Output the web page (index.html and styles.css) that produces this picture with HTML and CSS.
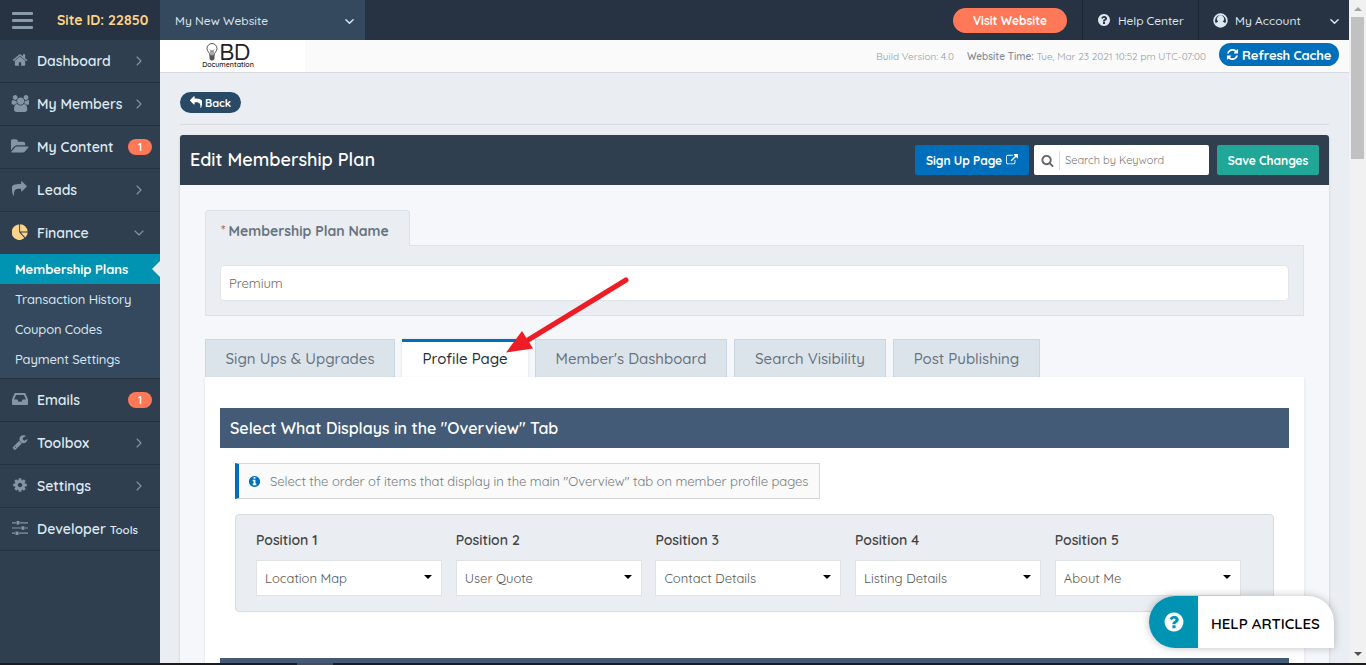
FILE: index.html
```
<!DOCTYPE html>
<html lang="en">
<head>
    <meta charset="UTF-8">
    <meta name="viewport" content="width=device-width, initial-scale=1.0">
    <title>Edit Membership Plan</title>
    <link rel="stylesheet" href="styles.css">
</head>
<body>
    <svg class="sprite">
        <symbol id="home" viewBox="0 0 1792 1792"><path d="M1472 992v480q0 26-19 45t-45 19h-384v-384h-256v384h-384q-26 0-45-19t-19-45v-480q0-1 .5-3t.5-3l575-474 575 474q1 2 1 6zm223-69l-62 74q-8 9-21 11h-3q-13 0-21-7l-692-577-692 577q-12 8-24 7-13-2-21-11l-62-74q-8-10-7-23.5t11-21.5l719-599q32-26 76-26t76 26l244 204v-195q0-14 9-23t23-9h192q14 0 23 9t9 23v408l219 182q10 8 11 21.5t-7 23.5z"/></symbol>
        <symbol id="users" viewBox="-64 0 1920 1792"><path d="M593 896q-162 5-265 128h-134q-82 0-138-40.5t-56-118.500q0-353 124-353 6 0 43.5 21t97.5 42.5 119 21.5q67 0 133-23-5 37-5 66 0 139 81 256zm1071 637q0 120-73 189.500t-194 69.500h-874q-121 0-194-69.500t-73-189.500q0-53 3.500-103.500t14-109 26.500-108.500 43-97.500 62-81 85.500-53.500 111.500-20q10 0 43 21.500t73 48 107 48 135 21.500 135-21.500 107-48 73-48 43-21.500q61 0 111.500 20t85.500 53.500 62 81 43 97.500 26.500 108.500 14 109 3.500 103.500zm-1024-1277q0 106-75 181t-181 75-181-75-75-181 75-181 181-75 181 75 75 181zm704 384q0 159-112.500 271.500t-271.500 112.500-271.500-112.500-112.500-271.500 112.500-271.500 271.500-112.500 271.500 112.500 112.500 271.500zm576 225q0 78-56 118.500t-138 40.500h-134q-103-123-265-128 81-117 81-256 0-29-5-66 66 23 133 23 59 0 119-21.500t97.500-42.500 43.500-21q124 0 124 353zm-128-609q0 106-75 181t-181 75-181-75-75-181 75-181 181-75 181 75 75 181z"/></symbol>
        <symbol id="folder" viewBox="0 0 1856 1792"><path d="M1815 952q0 31-31 66l-336 396q-43 51-120.500 86.500t-143.500 35.500h-1088q-34 0-60.500-13t-26.500-43q0-31 31-66l336-396q43-51 120.500-86.500t143.500-35.500h1088q34 0 60.500 13t26.500 43zm-343-344v160h-832q-94 0-197 47.500t-164 119.500l-337 396-5 6q0-4-.5-12.500t-.5-12.500v-960q0-92 66-158t158-66h320q92 0 158 66t66 158v32h544q92 0 158 66t66 158z"/></symbol>
        <symbol id="reply" viewBox="0 0 1792 1792"><path d="M1792 1120q0 166-127 451-3 7-10.500 24t-13.500 30-13 22q-12 17-28 17-15 0-23.500-10t-8.500-25q0-9 2.500-26.500t2.500-23.500q5-68 5-123 0-112-19.500-200.500t-54-153.500-89-111.500-115-76-141.500-42-160-12h-224v256q0 26-19 45t-45 19-45-19l-512-512q-19-19-19-45t19-45l512-512q19-19 45-19t45 19 19 45v256h224q713 0 875 403 53 134 53 333z"/></symbol>
        <symbol id="pie" viewBox="0 0 16 16"><path d="M7.200 .6V8.300l5.200 5.800A7.700 7.700 0 1 1 7.200 .6z"/><path d="M8.100 .3a7.500 7.500 0 0 1 7.500 7.200H8.100z"/><path d="M8.800 8.400h6.900a7.600 7.600 0 0 1-2.400 5z"/></symbol>
        <symbol id="inbox" viewBox="0 0 16 16"><path fill-rule="evenodd" d="M3.400 2h9.200q.8 0 1.100.8L16 8.600V13q0 1-1 1H1q-1 0-1-1V8.600l2.300-5.800Q2.600 2 3.400 2zM4 4L2.200 8.500h3.200l1.100 2.200h3l1.100-2.200h3.200L12 4z"/></symbol>
        <symbol id="wrench" viewBox="0 0 1792 1792"><path d="M448 1472q0-26-19-45t-45-19-45 19-19 45 19 45 45 19 45-19 19-45zm644-420l-682 682q-37 37-90 37-52 0-91-37l-106-108q-38-36-38-90 0-53 38-91l681-681q39 98 114.500 173.500t173.500 114.500zm634-435q0 39-23 106-47 134-164.500 217.500t-258.500 83.500q-185 0-316.500-131.500t-131.500-316.500 131.500-316.500 316.500-131.500q58 0 121.500 16.500t107.500 46.500q16 11 16 28t-16 28l-293 169v224l193 107q5-3 79-48.500t135.500-81 70.500-35.500q15 0 23.500 10t8.500 25z"/></symbol>
        <symbol id="cog" viewBox="0 0 1792 1792"><path d="M1152 896q0-106-75-181t-181-75-181 75-75 181 75 181 181 75 181-75 75-181zm512-109v222q0 12-8 23t-20 13l-185 28q-19 54-39 91 35 50 107 138 10 12 10 25t-9 23q-27 37-99 108t-94 71q-12 0-26-9l-138-108q-44 23-91 38-16 136-29 186-7 28-36 28h-222q-14 0-24.500-8.500t-11.500-21.500l-28-184q-49-16-90-37l-141 107q-10 9-25 9-14 0-25-11-126-114-165-168-7-10-7-23 0-12 8-23 15-21 51-66.500t54-70.500q-27-50-41-99l-183-27q-13-2-21-12.500t-8-23.500v-222q0-12 8-23t19-13l186-28q14-46 39-92-40-57-107-138-10-12-10-24 0-10 9-23 26-36 98.500-107.500t94.500-71.500q13 0 26 10l138 107q44-23 91-38 16-136 29-186 7-28 36-28h222q14 0 24.500 8.500t11.500 21.500l28 184q49 16 90 37l142-107q9-9 24-9 13 0 25 10 129 119 165 170 7 8 7 22 0 12-8 23-15 21-51 66.500t-54 70.500q26 50 41 98l183 28q13 2 21 12.500t8 23.500z"/></symbol>
        <symbol id="sliders" viewBox="0 0 16 16"><path d="M0 2.200h4v1.200H0zM8 2.200h8v1.200H8zM4.500 1h3v3.600h-3zM0 7.400h9v1.200H0zM13 7.400h3v1.200h-3zM9.500 6.200h3v3.600h-3zM0 12.600h3v1.200H0zM7 12.600h9v1.200H7zM3.500 11.400h3V15h-3z"/></symbol>
        <symbol id="question" viewBox="0 0 1792 1792"><path d="M1024 1376v-192q0-14-9-23t-23-9h-192q-14 0-23 9t-9 23v192q0 14 9 23t23 9h192q14 0 23-9t9-23zm256-672q0-88-55.500-163t-138.500-116-170-41q-243 0-371 213-15 24 8 42l132 100q7 6 19 6 16 0 25-12 53-68 86-92 34-24 86-24 48 0 85.500 26t37.500 59q0 38-20 61t-68 45q-63 28-115.500 86.500t-52.500 125.500v36q0 14 9 23t23 9h192q14 0 23-9t9-23q0-19 21.500-49.500t54.500-49.500q32-18 49-28.500t46-35 44.500-48 28-60.500 12.500-81zm384 192q0 209-103 385.500t-279.500 279.500-385.500 103-385.500-103-279.500-279.500-103-385.500 103-385.500 279.500-279.500 385.500-103 385.500 103 279.500 279.500 103 385.500z"/></symbol>
        <symbol id="info" viewBox="0 0 1792 1792"><path d="M1152 1376v-160q0-14-9-23t-23-9h-96v-512q0-14-9-23t-23-9h-320q-14 0-23 9t-9 23v160q0 14 9 23t23 9h96v320h-96q-14 0-23 9t-9 23v160q0 14 9 23t23 9h448q14 0 23-9t9-23zm-128-896v-160q0-14-9-23t-23-9h-192q-14 0-23 9t-9 23v160q0 14 9 23t23 9h192q14 0 23-9t9-23zm640 416q0 209-103 385.500t-279.500 279.500-385.500 103-385.500-103-279.500-279.500-103-385.500 103-385.500 279.500-279.500 385.500-103 385.500 103 279.500 279.500 103 385.500z"/></symbol>
        <symbol id="user" viewBox="0 0 16 16"><path fill-rule="evenodd" d="M8 .3a7.700 7.700 0 1 1 0 15.400A7.700 7.700 0 0 1 8 .3zM8 2.100a5.900 5.900 0 0 0-4.900 9.100c.6-1.200 1.400-1.900 2.500-2a3.700 3.700 0 1 1 4.800 0c1.100.1 1.900.8 2.500 2A5.900 5.900 0 0 0 8 2.100z"/></symbol>
        <symbol id="refresh" viewBox="0 0 1792 1792"><path d="M1639 1056q0 5-1 7-64 268-268 434.500t-478 166.500q-146 0-282.500-55t-243.500-157l-129 129q-19 19-45 19t-45-19-19-45v-448q0-26 19-45t45-19h448q26 0 45 19t19 45-19 45l-137 137q71 66 161 102t187 36q134 0 250-65t186-179q11-17 53-117 8-23 30-23h192q13 0 22.500 9.500t9.500 22.500zm25-800v448q0 26-19 45t-45 19h-448q-26 0-45-19t-19-45 19-45l138-138q-148-137-349-137-134 0-250 65t-186 179q-11 17-53 117-8 23-30 23h-199q-13 0-22.500-9.500t-9.500-22.500v-7q65-268 270-434.500t480-166.500q146 0 284 55.500t245 156.500l130-129q19-19 45-19t45 19 19 45z"/></symbol>
        <symbol id="external" viewBox="0 0 1792 1792"><path d="M1408 928v320q0 119-84.500 203.500t-203.500 84.500h-832q-119 0-203.500-84.500t-84.500-203.500v-832q0-119 84.500-203.500t203.500-84.500h704q14 0 23 9t9 23v64q0 14-9 23t-23 9h-704q-66 0-113 47t-47 113v832q0 66 47 113t113 47h832q66 0 113-47t47-113v-320q0-14 9-23t23-9h64q14 0 23 9t9 23zm384-864v512q0 26-19 45t-45 19-45-19l-176-176-652 652q-10 10-23 10t-23-10l-114-114q-10-10-10-23t10-23l652-652-176-176q-19-19-19-45t19-45 45-19h512q26 0 45 19t19 45z"/></symbol>
        <symbol id="search" viewBox="0 0 1792 1792"><path d="M1216 832q0-185-131.500-316.500t-316.500-131.500-316.500 131.500-131.500 316.500 131.500 316.500 316.500 131.500 316.500-131.500 131.500-316.500zm512 832q0 52-38 90t-90 38q-54 0-90-38l-343-342q-179 124-399 124-143 0-273.500-55.500t-225-150-150-225-55.500-273.500 55.500-273.500 150-225 225-150 273.500-55.500 273.500 55.500 225 150 150 225 55.500 273.500q0 220-124 399l343 343q37 37 37 90z"/></symbol>
        <symbol id="right" viewBox="0 0 10 10"><path class="line" d="M3 1l4 4-4 4"/></symbol>
        <symbol id="down" viewBox="0 0 10 10"><path class="line" d="M1 3l4 4 4-4"/></symbol>
        <symbol id="bulb" viewBox="0 0 12 18"><path class="line" d="M4 12.500C4 9.500 1 8.500 1 5.500a5 5 0 0 1 10 0c0 3-3 4-3 7zM4.500 7l1.500 1.500L7.500 7M5 12V8.500M7 12V8.500"/><path d="M3.500 12.500h5v3.500L7 17.500H5L3.500 16z"/></symbol>
    </svg>

    <div class="screen">
        <div class="app">
            <header class="topbar">
                <div class="site">
                    <div class="burger"><i></i><i></i><i></i></div>
                    <b>Site ID: 22850</b>
                </div>
                <div class="website">
                    <span>My New Website</span>
                    <svg class="arrow"><use href="#down"/></svg>
                </div>
                <a class="visit">Visit Website</a>
                <div class="help-center">
                    <svg><use href="#question"/></svg>
                    <span>Help Center</span>
                </div>
                <div class="account">
                    <svg class="user"><use href="#user"/></svg>
                    <span>My Account</span>
                    <svg class="arrow"><use href="#down"/></svg>
                </div>
            </header>
            <div class="content">
                <nav class="sidebar">
                    <a class="item"><svg><use href="#home"/></svg><span>Dashboard</span><svg class="angle"><use href="#right"/></svg></a>
                    <a class="item"><svg class="big"><use href="#users"/></svg><span>My Members</span><svg class="angle"><use href="#right"/></svg></a>
                    <a class="item"><svg class="big"><use href="#folder"/></svg><span>My Content</span><em>1</em></a>
                    <a class="item"><svg class="flip"><use href="#reply"/></svg><span>Leads</span><svg class="angle"><use href="#right"/></svg></a>
                    <a class="item open"><svg class="gold"><use href="#pie"/></svg><span>Finance</span><svg class="angle"><use href="#down"/></svg></a>
                    <ul class="submenu">
                        <li class="current">Membership Plans</li>
                        <li>Transaction History</li>
                        <li>Coupon Codes</li>
                        <li>Payment Settings</li>
                    </ul>
                    <a class="item"><svg><use href="#inbox"/></svg><span>Emails</span><em>1</em></a>
                    <a class="item"><svg><use href="#wrench"/></svg><span>Toolbox</span><svg class="angle"><use href="#right"/></svg></a>
                    <a class="item"><svg><use href="#cog"/></svg><span>Settings</span><svg class="angle"><use href="#right"/></svg></a>
                    <a class="item"><svg><use href="#sliders"/></svg><span>Developer <small>Tools</small></span></a>
                </nav>
                <main class="main">
                    <div class="infobar">
                        <div class="logo">
                            <div class="logo-top"><svg><use href="#bulb"/></svg>BD</div>
                            <div class="logo-text">Documentation</div>
                        </div>
                        <span class="build">Build Version: 4.0</span>
                        <span class="time"><b>Website Time:</b> Tue, Mar 23 2021 10:52 pm UTC-07:00</span>
                        <a class="refresh"><svg><use href="#refresh"/></svg>Refresh Cache</a>
                    </div>
                    <div class="back-row">
                        <a class="back"><svg><use href="#reply"/></svg>Back</a>
                    </div>
                    <section class="panel">
                        <div class="panel-head">
                            <h1>Edit Membership Plan</h1>
                            <a class="btn blue">Sign Up Page <svg><use href="#external"/></svg></a>
                            <div class="search"><svg><use href="#search"/></svg><span>Search by Keyword</span></div>
                            <a class="btn green">Save Changes</a>
                        </div>
                        <div class="panel-body">
                            <div class="name-label"><i>*</i> Membership Plan Name</div>
                            <div class="name-box">
                                <div class="name-input">Premium</div>
                            </div>
                            <ul class="tabs">
                                <li>Sign Ups &amp; Upgrades</li>
                                <li class="active">Profile Page</li>
                                <li>Member's Dashboard</li>
                                <li>Search Visibility</li>
                                <li>Post Publishing</li>
                            </ul>
                            <div class="tab-content">
                                <h2>Select What Displays in the "Overview" Tab</h2>
                                <div class="notice"><svg><use href="#info"/></svg><span>Select the order of items that display in the main "Overview" tab on member profile pages</span></div>
                                <div class="positions">
                                    <div class="position"><label>Position 1</label><div class="select">Location Map</div></div>
                                    <div class="position"><label>Position 2</label><div class="select">User Quote</div></div>
                                    <div class="position"><label>Position 3</label><div class="select">Contact Details</div></div>
                                    <div class="position"><label>Position 4</label><div class="select">Listing Details</div></div>
                                    <div class="position"><label>Position 5</label><div class="select">About Me</div></div>
                                </div>
                                <div class="next-title"></div>
                            </div>
                        </div>
                    </section>
                </main>
            </div>
        </div>
        <div class="scrollbar">
            <i class="up"></i>
            <div class="thumb"></div>
            <i class="down"></i>
        </div>
    </div>
    <div class="taskbar"><i></i></div>

    <div class="help-articles">
        <div class="help-icon"><svg><use href="#question"/></svg></div>
        <span>HELP ARTICLES</span>
    </div>

    <svg class="pointer" viewBox="0 0 130 84">
        <path d="M122 5L24 65" stroke="#ee1c25" stroke-width="5" stroke-linecap="round"/>
        <path d="M2 77.500l16-21.500 11 17.500z" fill="#ee1c25"/>
    </svg>
</body>
</html>
```
FILE: styles.css
```
*{
    padding: 0;
    margin: 0;
    list-style: none;
    box-sizing: border-box;
}
body{
    height: 665px;
    overflow: hidden;
    font-family: Quicksand, Lato, sans-serif;
    font-size: 13px;
    color: #444;
    background-color: #eaedf2;
}
svg{
    fill: currentColor;
    flex: none;
}
.line{
    fill: none;
    stroke: currentColor;
    stroke-linecap: round;
    stroke-linejoin: round;
}
.sprite{
    display: none;
}
.screen{
    display: flex;
    height: 663px;
    overflow: hidden;
}
.app{
    flex: 1;
}

/* top bar */
.topbar{
    display: flex;
    align-items: center;
    height: 40px;
    background-color: #273342;
    color: #dde7f0;
    font-size: 12px;
    font-weight: 500;
}
.site{
    display: flex;
    align-items: center;
    width: 160px;
    padding-left: 12px;
    gap: 24px;
}
.site b{
    font-size: 14px;
    color: #fcd488;
}
.burger i{
    display: block;
    width: 21px;
    height: 3px;
    background-color: #8a9baa;
    border-radius: 1px;
}
.burger i + i{
    margin-top: 4px;
}
.website{
    display: flex;
    align-items: center;
    justify-content: space-between;
    width: 205px;
    height: 40px;
    padding: 0 11px 0 15px;
    background-color: #34495e;
}
.arrow{
    width: 9px;
    height: 9px;
    margin-top: 2px;
}
.arrow, .angle{
    stroke-width: 1.6;
}
.visit{
    width: 114px;
    margin-left: auto;
    line-height: 25px;
    border-radius: 13px;
    background-color: #ff7857;
    color: #fff;
    font-weight: bold;
    text-align: center;
}
.help-center{
    display: flex;
    align-items: center;
    gap: 7px;
    width: 116px;
    height: 40px;
    margin-left: 15px;
    padding-left: 14px;
    border-left: 1px solid #1c2630;
    letter-spacing: -0.1px;
}
.help-center svg{
    width: 14px;
    height: 14px;
}
.account{
    display: flex;
    align-items: center;
    gap: 7px;
    width: 151px;
    height: 40px;
    padding: 0 10px 0 14px;
    border-left: 1px solid #1c2630;
}
.account .user{
    width: 15px;
    height: 15px;
    margin-top: 1px;
}
.account .arrow{
    margin-left: auto;
}

/* sidebar */
.content{
    display: flex;
    height: 623px;
}
.sidebar{
    width: 160px;
    background-color: #2f3f50;
}
.item{
    display: flex;
    align-items: center;
    height: 43px;
    padding-left: 12px;
    border-bottom: 1px solid #243240;
    color: #dfeaf3;
    font-size: 14px;
    font-weight: 600;
}
.item.open{
    height: 42px;
    border-bottom: none;
}
.item span{
    margin-left: 9px;
}
.item small{
    font-size: 11.5px;
}
.item svg{
    width: 16px;
    height: 16px;
    margin-top: -2px;
    color: #8495a5;
}
.item svg.big{
    width: 18px;
    height: 17px;
    margin: -2px -1px 0;
}
.item .flip{
    transform: scaleX(-1);
}
.item svg.gold{
    color: #fcd488;
}
.item svg.angle{
    width: 10px;
    height: 10px;
    margin: 0 16px 0 auto;
    stroke-width: 1.1;
}
.item em{
    width: 24px;
    margin-left: auto;
    margin-right: 8px;
    line-height: 16px;
    border-radius: 8px;
    background-color: #ff7857;
    color: #fff;
    font-size: 11px;
    font-style: normal;
    text-align: center;
}
.submenu{
    height: 125px;
    background-color: #34495e;
    border-bottom: 1px solid #243240;
}
.submenu li{
    padding-left: 15px;
    line-height: 30px;
    color: #dbe6ee;
    font-weight: 500;
    letter-spacing: -0.15px;
}
.submenu .current{
    position: relative;
    background-color: #0093b2;
    color: #fff;
    font-weight: bold;
    letter-spacing: -0.05px;
}
.current::after{
    content: "";
    position: absolute;
    top: 7px;
    right: 0;
    border: 8px solid transparent;
    border-right-color: #eaedf2;
    border-left-width: 0;
}

/* info bar */
.main{
    flex: 1;
}
.infobar{
    display: flex;
    align-items: center;
    height: 33px;
    padding-right: 10px;
    border-bottom: 1px solid #d8dade;
    background-color: #fafafa;
    color: #949ba5;
    font-size: 10px;
}
.logo{
    width: 145px;
    height: 32px;
    padding: 2px 9px 0 0;
    margin-right: auto;
    background-color: #fff;
    color: #222;
    text-align: center;
}
.logo-top{
    display: flex;
    justify-content: center;
    height: 19px;
    font-size: 23px;
    font-weight: 500;
    line-height: 20px;
    letter-spacing: -0.5px;
}
.logo-top svg{
    width: 12px;
    height: 18px;
    margin: 1px 1px 0 0;
    color: #555;
}
.logo-text{
    font-size: 7px;
    font-weight: 600;
    line-height: 8px;
}
.time{
    margin: 0 13px;
}
.time b{
    font-weight: 600;
    color: #848d98;
}
.refresh{
    display: flex;
    align-items: center;
    gap: 3px;
    width: 120px;
    height: 23px;
    margin-bottom: 3px;
    padding-left: 7px;
    border-radius: 12px;
    background-color: #006fbb;
    color: #fff;
    font-size: 13px;
    font-weight: bold;
    letter-spacing: -0.15px;
    white-space: nowrap;
}
.refresh svg{
    width: 13px;
    height: 13px;
}

.back-row{
    height: 52px;
    margin: 0 20px 10px;
    padding-top: 19px;
    border-bottom: 1px solid #d8dade;
}
.back{
    display: flex;
    align-items: center;
    gap: 3px;
    width: 61px;
    height: 21px;
    padding-left: 9px;
    border-radius: 11px;
    background-color: #294a66;
    color: #fff;
    font-size: 11px;
    font-weight: bold;
}
.back svg{
    width: 13px;
    height: 13px;
}

/* panel */
.panel{
    height: 540px;
    margin: 0 20px;
    border-radius: 3px;
    background-color: #f5f7fb;
    box-shadow: 0 1px 3px rgba(0,0,0,0.15);
}
.panel-head{
    display: flex;
    align-items: center;
    height: 50px;
    padding: 0 10px;
    border-radius: 3px 3px 0 0;
    background-color: #2f3f50;
    color: #fff;
}
.panel-head h1{
    margin: -1px auto 0 0;
    font-size: 18px;
    font-weight: 600;
}
.btn{
    display: flex;
    align-items: center;
    justify-content: center;
    gap: 4px;
    height: 30px;
    border-radius: 2px;
    font-size: 12px;
    font-weight: bold;
    letter-spacing: -0.05px;
}
.btn svg{
    width: 12px;
    height: 12px;
}
.blue{
    width: 114px;
    background-color: #006fbb;
}
.green{
    width: 102px;
    background-color: #20a797;
}
.search{
    display: flex;
    align-items: center;
    width: 175px;
    height: 30px;
    margin: 0 8px 0 5px;
    padding-left: 7px;
    border-radius: 2px;
    background-color: #fff;
    color: #666;
}
.search svg{
    width: 13px;
    height: 13px;
}
.search span{
    margin-left: 5px;
    padding-left: 5px;
    border-left: 1px solid #ddd;
    color: #777;
    font-size: 11px;
    line-height: 19px;
}
.panel-body{
    padding: 25px;
}
.name-label{
    position: relative;
    width: 205px;
    height: 36px;
    margin-bottom: -1px;
    padding-left: 15px;
    border: 1px solid #dae2ea;
    border-bottom: none;
    border-radius: 4px 4px 0 0;
    background-color: #eaedf2;
    color: #667380;
    font-size: 14px;
    font-weight: bold;
    line-height: 40px;
}
.name-label i{
    color: #b85c50;
    font-style: normal;
    font-weight: 500;
    letter-spacing: -1px;
}
.name-box{
    height: 71px;
    padding: 19px 14px 0;
    border: 1px solid #dae2ea;
    background-color: #eaedf2;
}
.name-input{
    height: 36px;
    padding-left: 8px;
    border: 1px solid #e2e4e6;
    border-radius: 4px;
    background-color: #fff;
    color: #666;
    line-height: 35px;
}

/* tabs */
.tabs{
    display: flex;
    gap: 7px;
    height: 38px;
    margin-top: 23px;
}
.tabs li{
    width: 190px;
    border: 1px solid #cad6e1;
    border-bottom: none;
    background-color: #dce4eb;
    color: #66727e;
    font-size: 15px;
    font-weight: 550;
    line-height: 37px;
    text-align: center;
}
.tabs li:nth-child(2){
    width: 126px;
}
.tabs li:nth-child(3){
    width: 192px;
}
.tabs li:nth-child(4){
    width: 152px;
}
.tabs li:nth-child(5){
    width: 147px;
}
.tabs .active{
    border: none;
    border-top: 3px solid #006fbb;
    background-color: #fff;
    color: #222d38;
    line-height: 33px;
    box-shadow: 0 0 3px rgba(0,0,0,0.1);
}
.tab-content{
    position: relative;
    height: 300px;
    padding: 31px 15px;
    background-color: #fff;
    box-shadow: 0 1px 3px rgba(0,0,0,0.1);
}
.tab-content h2, .next-title{
    height: 40px;
    padding-left: 10px;
    background-color: #435b76;
    color: #fff;
    font-size: 16px;
    font-weight: 600;
    line-height: 40px;
}
.notice{
    display: flex;
    align-items: center;
    width: 585px;
    height: 36px;
    margin: 15px 15px;
    padding-left: 9px;
    border: 1px solid #d5d7da;
    border-left: 4px solid #006fbb;
    background-color: #fafafa;
    color: #6f7a85;
    letter-spacing: -0.03px;
    white-space: nowrap;
}
.notice svg{
    width: 13px;
    height: 13px;
    margin-right: 9px;
    color: #006fbb;
}
.positions{
    display: flex;
    gap: 13.7px;
    height: 98px;
    margin: 0 15px 46px;
    padding: 17px 20px;
    border: 1px solid #d8dce1;
    border-radius: 4px;
    background-color: #eaedf2;
}
.position{
    width: 186px;
}
.position label{
    display: block;
    font-size: 14px;
    font-weight: 600;
    line-height: 17px;
}
.select{
    display: flex;
    align-items: center;
    justify-content: space-between;
    height: 36px;
    margin-top: 11px;
    padding: 0 9px 0 8px;
    border: 1px solid #e0e2e4;
    background-color: #fff;
    color: #555;
}
.select::after{
    content: "";
    margin-top: -3px;
    border: 4px solid transparent;
    border-top-color: #000;
    border-bottom: none;
}

/* floating help button */
.help-articles{
    position: absolute;
    left: 1149px;
    top: 596px;
    display: flex;
    align-items: center;
    width: 185px;
    height: 52px;
    overflow: hidden;
    border-radius: 26px 26px 0 26px;
    background-color: #fff;
    color: #000;
    font-size: 15px;
    font-weight: 600;
    box-shadow: 0 0 8px rgba(0,0,0,0.25);
}
.help-articles span{
    margin-top: 3px;
}
.help-icon{
    display: flex;
    align-items: center;
    justify-content: center;
    width: 49px;
    height: 52px;
    margin-right: 13px;
    background-color: #0093b2;
    color: #fff;
}
.help-icon svg{
    width: 22px;
    height: 22px;
}
.pointer{
    position: absolute;
    left: 504px;
    top: 275px;
    width: 130px;
    height: 84px;
}

/* window edges */
.scrollbar{
    display: flex;
    flex-direction: column;
    align-items: center;
    width: 17px;
    padding: 7px 0;
    background-color: #f1f1f1;
}
.scrollbar i{
    border: 4px solid transparent;
}
.scrollbar .up{
    border-top: none;
    border-bottom-color: #a3a3a3;
}
.scrollbar .down{
    margin-top: auto;
    border-bottom: none;
    border-top-color: #505050;
}
.thumb{
    width: 13px;
    height: 142px;
    margin-top: 6px;
    background-color: #c1c1c1;
}
.taskbar{
    height: 2px;
    padding-left: 297px;
    background-color: #1c1c1e;
}
.taskbar i{
    display: block;
    width: 36px;
    height: 2px;
    background-color: #4b4b4d;
}
```
